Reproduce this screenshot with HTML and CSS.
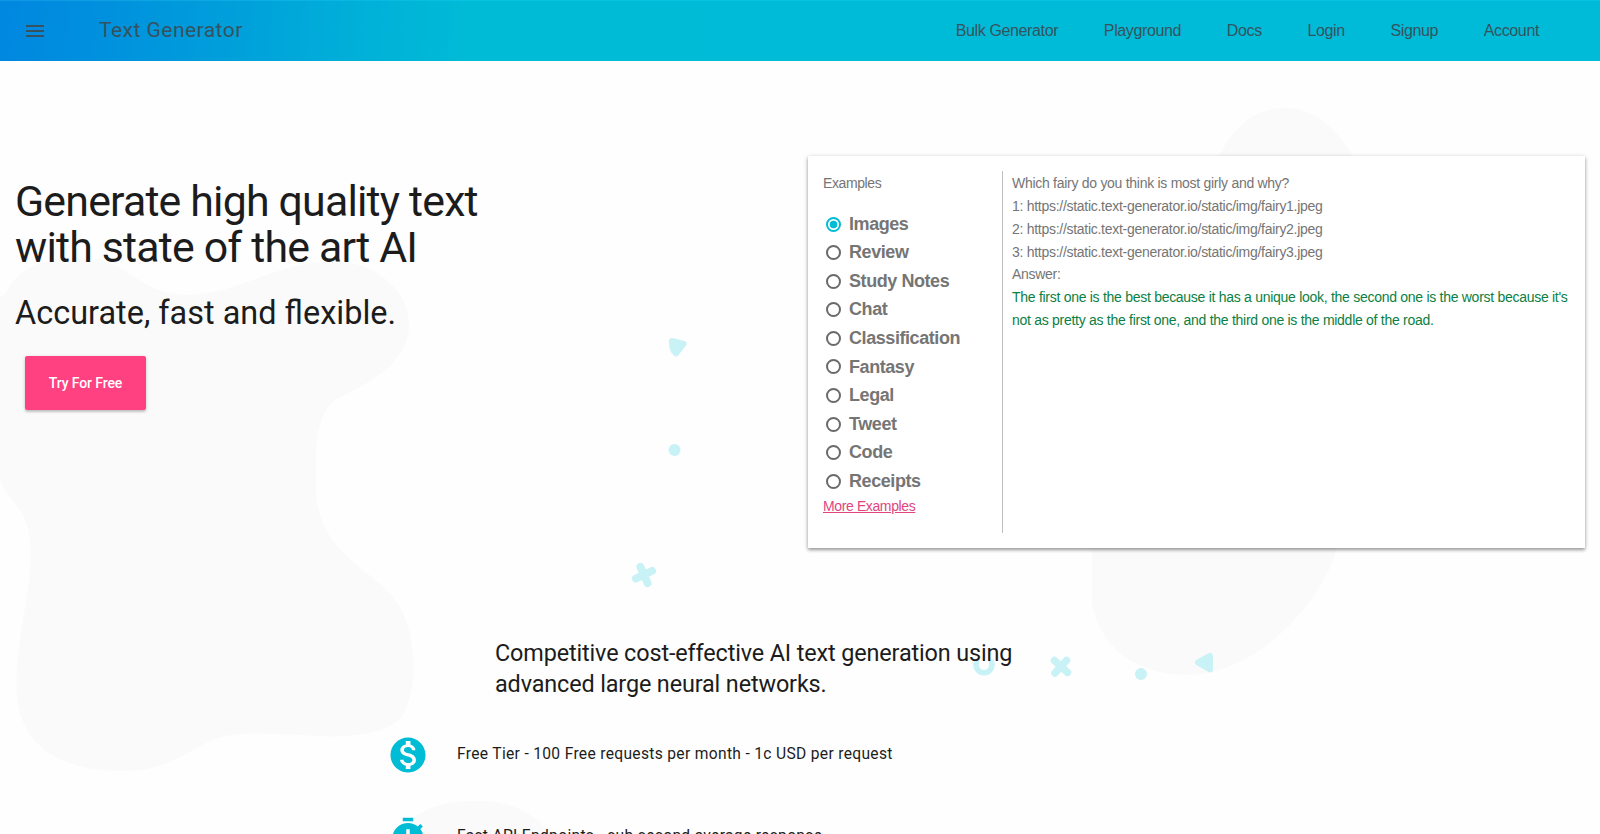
FILE: index.html
```html
<!DOCTYPE html>
<html lang="en">
<head>
<meta charset="utf-8">
<title>Text Generator</title>
<link rel="stylesheet" href="styles.css">
</head>
<body>
<svg class="backdrop" viewBox="0 0 1600 834" aria-hidden="true">
  <g fill="#fafafa">
    <path d="M0 297C8 294 8 285 16 278C32 262 55 257 85 258C128 259 138 294 185 295C240 295 270 263 335 261C370 261 409 287 409 325C409 362 370 383 340 397C322 407 319 425 316 450L316 495C320 528 333 545 360 568C392 592 404 606 410 635C416 665 415 690 403 715C385 738 340 738 300 735C255 733 228 730 200 746C170 764 150 771 125 771C85 771 50 762 30 735C10 705 16 665 23 620C30 580 36 540 23 515C14 500 6 494 0 480Z"/>
    <path d="M1218 158C1236 122 1258 108 1285 108C1315 108 1336 128 1354 158V500L1337 548C1325 595 1262 675 1185 675C1135 673 1103 650 1092 605V540Z"/>
    <path d="M405 834C409 808 448 800 484 801C520 803 541 820 549 834Z"/>
  </g>
  <g fill="#c9f2f7" stroke="#c9f2f7" stroke-linejoin="round" stroke-linecap="round">
    <path d="M672 341L683.500 344L676 353.500Q671.500 350 672 341Z" stroke-width="6"/>
    <circle cx="674.500" cy="450" r="6" stroke="none"/>
    <path d="M640.500 567L647.500 583M636 578.500L652 571" stroke-width="8"/>
    <path d="M976.500 662A8 8 0 1 0 991.500 662" fill="none" stroke-width="5.500"/>
    <path d="M1054.500 660.500L1067.500 672.500M1066.500 660.500L1055 673" stroke-width="7.500"/>
    <circle cx="1141" cy="674" r="6" stroke="none"/>
    <path d="M1198 662.500L1210 656V669.500Z" stroke-width="6"/>
  </g>
</svg>

<header class="topbar">
  <svg class="menu" viewBox="0 0 18 12"><path d="M0 1h18M0 6h18M0 11h18"/></svg>
  <span class="brand">Text Generator</span>
  <nav class="links">
    <a>Bulk Generator</a><a>Playground</a><a>Docs</a><a>Login</a><a>Signup</a><a>Account</a>
  </nav>
</header>

<main>
  <section class="hero">
    <div class="pitch">
      <h1>Generate high quality text<br>with state of the art AI</h1>
      <h2>Accurate, fast and flexible.</h2>
      <button class="cta">Try For Free</button>
    </div>
    <div class="card">
      <div class="examples">
        <p class="caption">Examples</p>
        <label class="option checked"><i></i>Images</label>
        <label class="option"><i></i>Review</label>
        <label class="option"><i></i>Study Notes</label>
        <label class="option"><i></i>Chat</label>
        <label class="option"><i></i>Classification</label>
        <label class="option"><i></i>Fantasy</label>
        <label class="option"><i></i>Legal</label>
        <label class="option"><i></i>Tweet</label>
        <label class="option"><i></i>Code</label>
        <label class="option"><i></i>Receipts</label>
        <a class="more">More Examples</a>
      </div>
      <div class="output">
        Which fairy do you think is most girly and why?<br>
        1: https://static.text-generator.io/static/img/fairy1.jpeg<br>
        2: https://static.text-generator.io/static/img/fairy2.jpeg<br>
        3: https://static.text-generator.io/static/img/fairy3.jpeg<br>
        Answer:<br>
        <span class="generated">The first one is the best because it has a unique look, the second one is the worst because it's<br>not as pretty as the first one, and the third one is the middle of the road.</span>
      </div>
    </div>
  </section>

  <section class="features">
    <h3>Competitive cost-effective AI text generation using<br>advanced large neural networks.</h3>
    <div class="feature">
      <svg viewBox="0 0 24 24"><path d="M12 2C6.480 2 2 6.480 2 12s4.480 10 10 10 10-4.480 10-10S17.520 2 12 2zm1.410 16.090V20h-2.670v-1.930c-1.710-.36-3.160-1.460-3.270-3.400h1.960c.1 1.050.82 1.870 2.650 1.870 1.960 0 2.400-.98 2.400-1.590 0-.83-.44-1.610-2.670-2.140-2.480-.6-4.180-1.620-4.180-3.670 0-1.720 1.390-2.840 3.110-3.210V4h2.670v1.950c1.860.45 2.790 1.860 2.850 3.390H14.300c-.05-1.110-.64-1.870-2.220-1.870-1.500 0-2.400.68-2.400 1.640 0 .84.65 1.390 2.670 1.910s4.180 1.390 4.180 3.910c-.01 1.830-1.380 2.830-3.120 3.160z"/></svg>
      <span>Free Tier - 100 Free requests per month - 1c USD per request</span>
    </div>
    <div class="feature">
      <svg viewBox="0 0 24 24"><path fill-rule="evenodd" d="M15 1H9v2h6V1zm-4 13h2V7.500h-2v6.500zm8.030-6.610 1.420-1.420c-.43-.51-.9-.99-1.410-1.410l-1.420 1.420C16.070 4.740 14.120 4 12 4c-4.970 0-9 4.030-9 9s4.020 9 9 9 9-4.030 9-9c0-2.120-.74-4.070-1.970-5.610z"/></svg>
      <span>Fast API Endpoints - sub second average response</span>
    </div>
  </section>
</main>
</body>
</html>
```
FILE: styles.css
```css
* { box-sizing: border-box; }
html, body { height: 100%; }
body {
  margin: 0;
  overflow: hidden;
  position: relative;
  background: #fefefe;
  color: #1c1c1c;
  font-family: Roboto, sans-serif;
}
.backdrop { position: absolute; top: 0; left: 0; width: 1600px; height: 834px; z-index: -1; }
h1, h2, h3, p { margin: 0; font-weight: 400; }

.topbar {
  display: flex;
  align-items: center;
  height: 61px;
  padding: 0 61px 0 26px;
  background: linear-gradient(95deg, #0087e0 0, #0090de 100px, #009fdb 230px, #00b0d8 360px, #00bbd6 470px, #00bbd8 100%);
  border-top: 1px solid #08c2e2;
  border-image: linear-gradient(90deg, #1195e6, #08c2e2 460px) 1;
  color: #34535e;
}
.menu { width: 18px; height: 12px; margin: -1px 0 0 0; fill: none; stroke: #34535e; stroke-width: 2; }
.brand { margin: -2px 0 0 55px; font-size: 21px; letter-spacing: 0.470px; }
.links {
  display: flex;
  gap: 45.700px;
  margin: -1px 0 0 auto;
  font: 16px "Liberation Sans", sans-serif;
  letter-spacing: -0.370px;
}

.hero { display: flex; justify-content: space-between; height: 571px; padding: 95px 15px 0 15px; }
.pitch { padding-top: 23px; }
h1 { font-size: 42.860px; line-height: 45.700px; letter-spacing: -0.820px; }
h2 { margin-top: 23px; font-size: 32.460px; line-height: 40px; }
.cta {
  display: block;
  width: 121px;
  height: 54px;
  margin: 23px 0 0 10px;
  padding-bottom: 2px;
  border: 0;
  border-radius: 2px;
  background: #ff4081;
  color: #fff;
  font: 500 14px Roboto, sans-serif;
  letter-spacing: -0.120px;
  box-shadow: 0 2px 2px rgba(0,0,0,.14), 0 1px 4px rgba(0,0,0,.14);
}
.card {
  display: flex;
  width: 777px;
  height: 392px;
  padding: 15px;
  background: #fff;
  color: #757575;
  font: 14px/22.860px "Liberation Sans", sans-serif;
  letter-spacing: -0.280px;
  box-shadow: 0 2px 3px rgba(0,0,0,.3), 0 1px 5px rgba(0,0,0,.18);
}
.examples { width: 180px; flex: none; border-right: 1px solid #bdbdbd; }
.caption { padding-top: 1px; margin-bottom: 15px; letter-spacing: -0.400px; }
.option {
  display: flex;
  align-items: center;
  gap: 8px;
  height: 28.570px;
  padding-left: 3px;
  font-size: 18px;
  font-weight: 700;
  letter-spacing: -0.430px;
}
.option i { width: 15px; height: 15px; border: 2px solid #6a6a6a; border-radius: 50%; }
.option.checked i { border-color: #00bcd4; background: radial-gradient(circle, #00bcd4 3.500px, #fff 4.200px); }
.more { display: block; width: max-content; color: #e0457f; text-decoration: underline; letter-spacing: -0.380px; }
.output { padding: 1px 0 0 9px; white-space: nowrap; }
.generated { color: #0b8043; }

.features { height: 202px; overflow: hidden; padding-left: 390px; }
h3 { margin: 6px 0 15px 105px; font-size: 23.400px; line-height: 30.500px; letter-spacing: -0.130px; }
.feature { display: flex; align-items: center; gap: 28px; height: 82px; font-size: 15.600px; letter-spacing: 0.320px; }
.feature span { padding-bottom: 3px; }
.feature svg { width: 42px; height: 42px; margin-left: -3px; fill: #00bcd4; }
```
